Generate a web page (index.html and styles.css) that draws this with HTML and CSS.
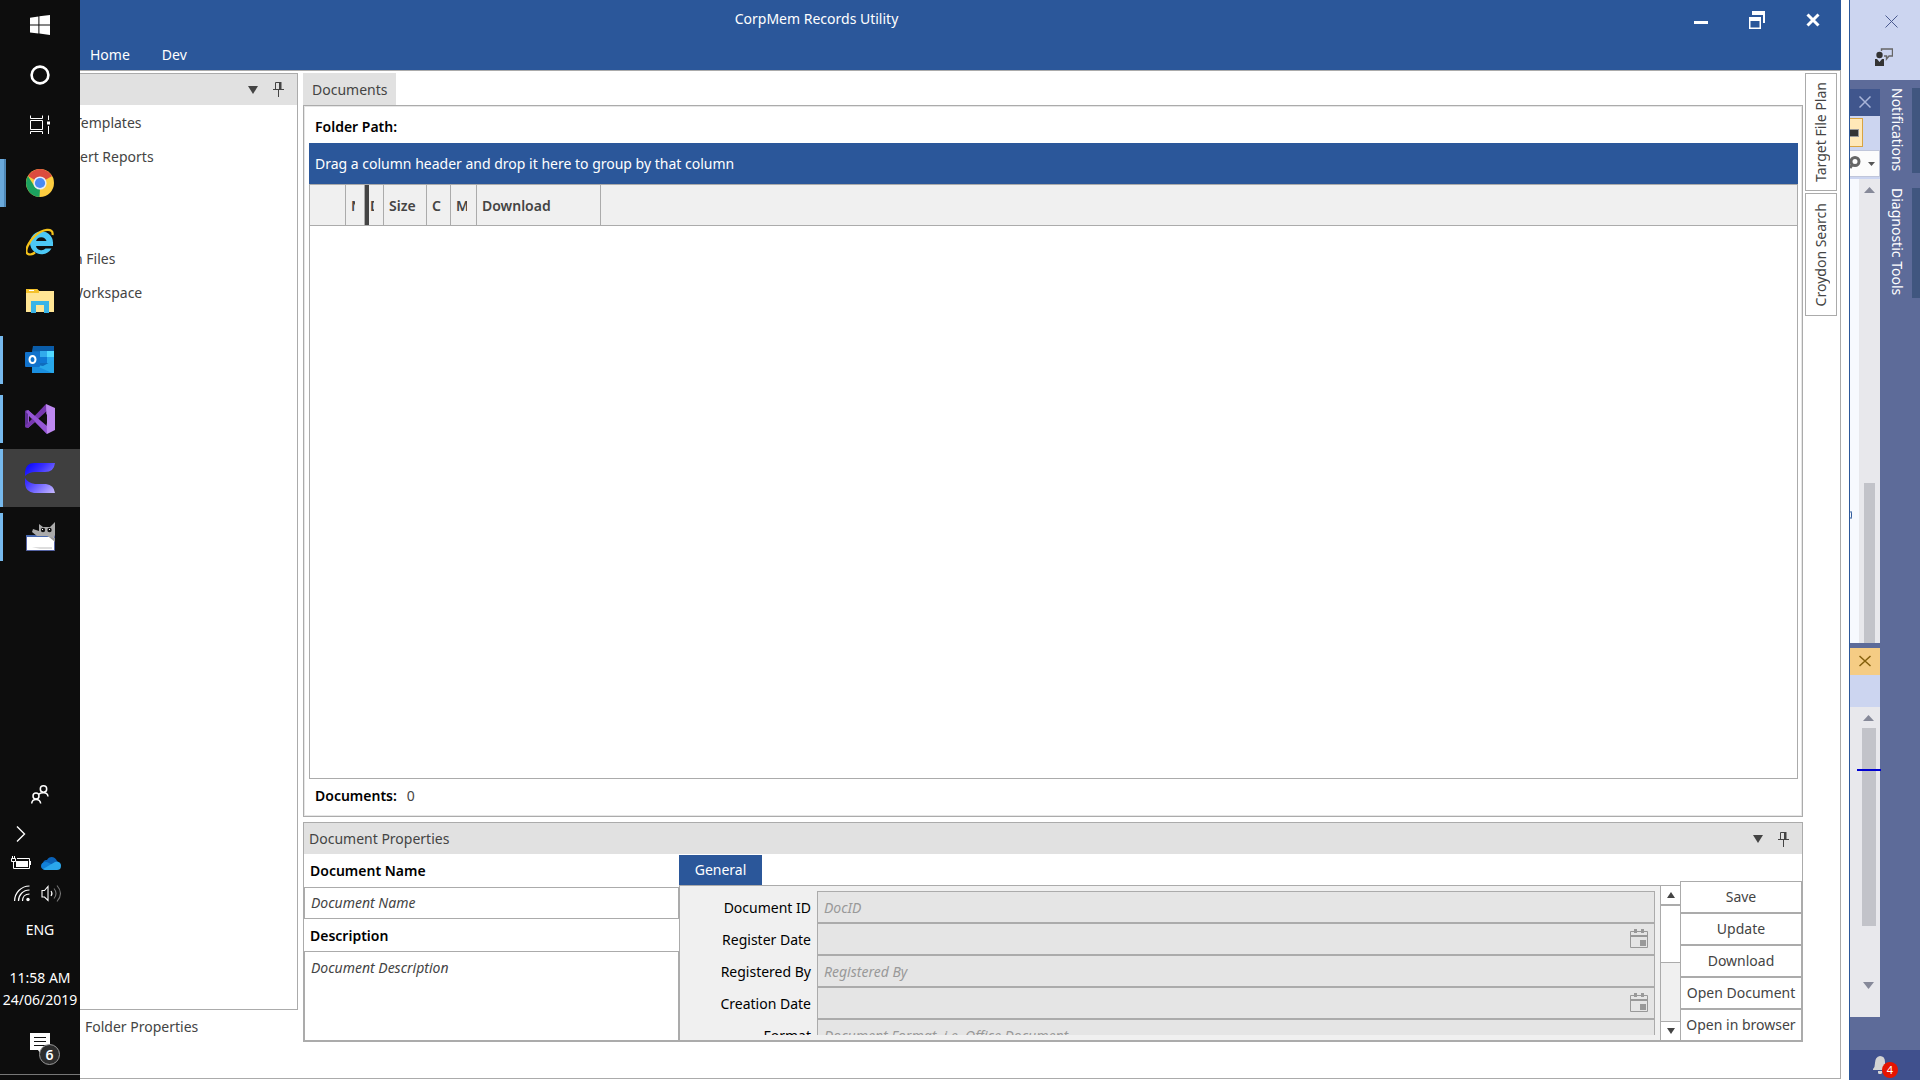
FILE: index.html
```
<!DOCTYPE html>
<html lang="en">
<head>
<meta charset="utf-8">
<title>CorpMem Records Utility</title>
<link rel="stylesheet" href="styles.css">
</head>
<body>
<nav class="taskbar" aria-label="Taskbar">
  <button class="tb-sys" aria-label="Start"><svg width="20" height="20" viewBox="0 0 20 20" fill="#fff"><path d="M0 2.7 8.4 1.5V9.4H0zM9.4 1.3 20 0V9.4H9.4zM0 10.4H8.4V18.5L0 17.4zM9.4 10.4H20V20L9.4 18.6z"/></svg></button>
  <button class="tb-sys" aria-label="Cortana"><svg width="20" height="20" viewBox="0 0 20 20"><circle cx="10" cy="10" r="8.4" fill="none" stroke="#fff" stroke-width="2.6"/></svg></button>
  <button class="tb-sys" aria-label="Task view"><svg width="20" height="20" viewBox="0 0 20 20" fill="none" stroke="#fff"><path d="M.5 .5V3.5H12.5V.5M.5 5.5H12.5V14.5H.5zM.5 19V16.5H12.5V19M18.5 .5V5M18.5 11V19"/><path d="M17 6.5h3v3h-3z" fill="#fff" stroke="none"/></svg></button>
  <div class="tb-apps">
    <button class="tb-app open multi" aria-label="Chrome"><svg width="28" height="28" viewBox="0 0 28 28"><circle cx="14" cy="14" r="14" fill="#fdcd40"/><path d="M14 14 1.9 7A14 14 0 0 1 26.1 7z" fill="#dc4b3e"/><path d="M1.9 7 8.6 17.5 14 20.5 13.5 28A14 14 0 0 1 1.9 7z" fill="#1ba25f"/><circle cx="14" cy="14" r="6.6" fill="#e8eefa"/><circle cx="14" cy="14" r="5.1" fill="#4a8af4"/></svg></button>
    <button class="tb-app" aria-label="Internet Explorer"><svg width="28" height="28" viewBox="0 0 28 28" fill="none"><path d="M8 15.500H27A11.500 11.500 0 1 0 25.500 20.500H19.500A5.500 5 0 0 1 10 18H27V15.500z" fill="#4cc8f5"/><path d="M10 13A5.500 5.500 0 0 1 20.500 13z" fill="#111"/><path d="M26.500 7C28-1 16 1 9 8 2 14-2 24 2 26 4 27 7 26 9 24.500" stroke="#f4c21b" stroke-width="2.200"/></svg></button>
    <button class="tb-app" aria-label="File Explorer"><svg width="28" height="24" viewBox="0 0 28 24"><path d="M0 0H11L13 2H28V23H0z" fill="#ffe594"/><path d="M0 0H11L13 2V4H0z" fill="#f4c22c"/><path d="M3 1h5v1H3z" fill="#fff"/><path d="M5 24V12H23V24H18V16H10V24z" fill="#39b4e8"/></svg></button>
    <button class="tb-app open" aria-label="Outlook"><svg width="30" height="28" viewBox="0 0 30 28"><path d="M8 0H29V27H7V6z" fill="#0f6cbd"/><path d="M8 0H29V5H8z" fill="#0a5ca8"/><path d="M15 5h7v6h-7z" fill="#31abec"/><path d="M22 5h7v6h-7z" fill="#50d9ff"/><path d="M15 11h7v6h-7z" fill="#0f78d4"/><path d="M22 11h7v6h-7z" fill="#2aa8ee"/><path d="M7 18 18 20 29 14V27H7z" fill="#28a8ea"/><path d="M7 18 27 27H7z" fill="#1a8fe0"/><rect y="6" width="15" height="15" rx="1" fill="#1172cc"/><ellipse cx="7.500" cy="13.500" rx="3" ry="3.600" fill="none" stroke="#fff" stroke-width="2"/></svg></button>
    <button class="tb-app open" aria-label="Visual Studio"><svg width="30" height="30" viewBox="0 0 30 30"><path d="M0 7 3 6 22 24V30L10 18 3 24 0 23z" fill="#9a5bd6"/><path d="M0 7 3 6V24L0 23z" fill="#5e2e96"/><path d="M3 24 0 22 21 0 23 6z" fill="#7737b0"/><path d="M3 6 22 22V30L1 8z" fill="#9556d6"/><path d="M21 0 30 4V26L22 30z" fill="#bd88f0"/><path d="M4 12 7 15 4 18zM16 15 22 10V20z" fill="#131013"/></svg></button>
    <button class="tb-app open active" aria-label="CorpMem Records Utility"><svg width="30" height="30" viewBox="0 0 30 30"><defs><linearGradient id="cg" x1="0" y1="0" x2="1" y2="1"><stop offset="0" stop-color="#00f"/><stop offset=".35" stop-color="#3a30ff"/><stop offset="1" stop-color="#c8baff"/></linearGradient></defs><path d="M0 13V9Q1 0 9 0H30Q29 9 20 9H10Q4 9 0 13zM0 15Q3 20 10 21H21Q29 22 30 30H9Q1 29 0 21z" fill="url(#cg)"/></svg></button>
    <button class="tb-app open" aria-label="GIMP"><svg width="30" height="30" viewBox="0 0 30 30"><path d="M1.500 13.500H29.500V28.500H1.500z" fill="#fff" stroke="#5563a4"/><path d="M1 13h28v2H1z" fill="#4667ae"/><path d="M14 2 18 5H25L30 0V13L28 17 22 14H12L7 10 8 7 14 9z" fill="#aaa"/><path d="M24 15 30 20V16z" fill="#999"/><circle cx="18" cy="8" r="2.200" fill="#111"/><circle cx="24.500" cy="8" r="2.200" fill="#111"/><path d="M17 7h1v1h-1zM24 7h1v1h-1z" fill="#fff"/><path d="M7 25h20v2H15z" fill="#ddd"/></svg></button>
  </div>
  <div class="tray">
    <button class="tray-btn people" aria-label="People"><svg width="18" height="19" viewBox="0 0 18 19" fill="none" stroke="#fff" stroke-width="1.500"><circle cx="12.500" cy="4" r="3.200"/><path d="M8 9.500C9 7.500 16.500 6 17 11.500"/><circle cx="5" cy="11" r="3"/><path d="M.7 18.500C1 13 9 13 9.700 18.500"/></svg></button>
    <button class="tray-btn more" aria-label="Show hidden icons"><svg width="10" height="16" viewBox="0 0 10 16" fill="none" stroke="#fff" stroke-width="1.400"><path d="M1 .5 8.500 8 1 15.500"/></svg></button>
    <div class="tray-row">
      <svg width="20" height="14" viewBox="0 0 20 14" fill="none" stroke="#fff"><path d="M6 2.500H18.500V12.500H2.500V6"/><path d="M5 5h12v6H5zM19 5h1v4h-1z" fill="#fff" stroke="none"/><path d="M.5 2.500H4.500V5.500H.5zM1.500 0V2M3.500 0V2"/></svg>
      <svg width="20" height="13" viewBox="0 0 20 13"><path d="M2 7C2 3 5 3 6 3 8-1 14-1 16 4L18 6 12 10z" fill="#0a62b8"/><path d="M0 9C0 5 5 4 8 6L14 9 6 13H4Q0 12 0 9z" fill="#1180d8"/><path d="M2 12 14 5C19 4 20 7 20 9 20 12 18 13 16 13H4z" fill="#2aa6ec"/></svg>
    </div>
    <div class="tray-row">
      <svg width="17" height="17" viewBox="0 0 17 17" fill="none" stroke="#fff" stroke-width="1.200"><path d="M.6 16C.6 8 7 1 15.500 1M4.500 16C4.500 10 9 5 15.500 5M8.500 16C8.500 12 11 9 15.500 9"/><circle cx="14" cy="14.500" r="1.700" fill="#fff" stroke="none"/></svg>
      <svg width="21" height="17" viewBox="0 0 21 17" fill="none" stroke="#fff" stroke-width="1.100"><path d="M1 5.500H3.500L7 1.500V15.500L3.500 12H1zM10 6Q12 8.500 10 11"/><path d="M13 3.500Q17 8.500 13 13.500M16 .5Q23 8.500 16 16.500" stroke="#777"/></svg>
    </div>
    <span class="lang">ENG</span>
    <span class="clock">11:58 AM<br>24/06/2019</span>
    <button class="tray-btn action" aria-label="Action center"><svg width="20" height="20" viewBox="0 0 20 20"><path d="M0 0H20V17H13L10 20 8 17H0z" fill="#fff"/><path d="M4 4.500H16M4 8.500H16M4 12.500H16" stroke="#111"/></svg><span class="badge">6</span></button>
    <span class="desktop"></span>
  </div>
</nav>

<main class="window">
  <header class="titlebar">
    <h1>CorpMem Records Utility</h1>
    <div class="win-btns">
      <button aria-label="Minimize"><svg width="14" height="14" viewBox="0 0 14 14"><path d="M0 8h14v3H0z" fill="#fff"/></svg></button>
      <button aria-label="Restore"><svg width="16" height="18" viewBox="0 0 16 18" fill="#fff"><path d="M3 0H16V12H14V4H3zM0 6H12V18H0zM1.500 10V16.500H10.500V10z" fill-rule="evenodd"/></svg></button>
      <button aria-label="Close"><svg width="14" height="14" viewBox="0 0 14 14" stroke="#fff" stroke-width="3"><path d="M1.500 1.500 12.500 12.500M12.500 1.500 1.500 12.500"/></svg></button>
    </div>
    <nav class="menu"><a href="#home">Home</a><a href="#dev">Dev</a></nav>
  </header>
  <div class="workspace">
    <aside class="left">
      <section class="folders">
        <div class="pane-head">
          <button aria-label="Pane menu"><svg width="10" height="8" viewBox="0 0 10 8"><path d="M0 0H10L5 8z" fill="#444"/></svg></button>
          <button aria-label="Auto hide"><svg width="11" height="15" viewBox="0 0 11 15" fill="none" stroke="#444"><path d="M2.500 8V.5H7.500V8M0 7.500H11M5.500 8V15"/><path d="M6 0h2.500v8H6z" fill="#444" stroke="none"/></svg></button>
        </div>
        <ul class="tree">
          <li class="cut">Templates</li>
          <li>ert Reports</li>
          <li></li>
          <li></li>
          <li class="cut">n Files</li>
          <li class="cut-wide">Workspace</li>
        </ul>
      </section>
      <a class="bottom-tab" href="#folder">Folder Properties</a>
    </aside>

    <div class="center">
      <a class="doc-tab" href="#documents">Documents</a>
      <section class="documents">
        <h2>Folder Path:</h2>
        <p class="group-bar">Drag a column header and drop it here to group by that column</p>
        <div class="grid">
          <table>
            <colgroup><col class="c-sel"><col class="c-tiny"><col class="c-tiny"><col class="c-size"><col class="c-c"><col class="c-m"><col class="c-dl"><col></colgroup>
            <thead><tr><th></th><th><span>N</span></th><th class="drop"><span>D</span></th><th><span>Size</span></th><th><span>C</span></th><th><span>M</span></th><th><span>Download</span></th><th></th></tr></thead>
          </table>
        </div>
        <p class="count"><b>Documents:</b><span>0</span></p>
      </section>

      <section class="props">
        <div class="pane-head">
          <h2>Document Properties</h2>
          <button aria-label="Pane menu"><svg width="10" height="8" viewBox="0 0 10 8"><path d="M0 0H10L5 8z" fill="#444"/></svg></button>
          <button aria-label="Auto hide"><svg width="11" height="15" viewBox="0 0 11 15" fill="none" stroke="#444"><path d="M2.500 8V.5H7.500V8M0 7.500H11M5.500 8V15"/><path d="M6 0h2.500v8H6z" fill="#444" stroke="none"/></svg></button>
        </div>
        <div class="props-body">
          <form class="names">
            <label for="dname">Document Name</label>
            <input id="dname" placeholder="Document Name">
            <label for="ddesc">Description</label>
            <textarea id="ddesc" placeholder="Document Description"></textarea>
          </form>
          <div class="general">
            <button class="gen-tab">General</button>
            <div class="gen-area">
              <div class="fields">
                <label for="f1">Document ID</label><div class="field"><input id="f1" placeholder="DocID" disabled></div>
                <label for="f2">Register Date</label><div class="field"><input id="f2" disabled><svg width="18" height="20" viewBox="0 0 18 20" fill="none" stroke="#999"><path d="M.5 2.500H17.500V18.500H.5z"/><path d="M0 6h18v2H0zM10 11h6v6h-6zM4 0h3v4H4zM11 0h3v4h-3z" fill="#999" stroke="none"/></svg></div>
                <label for="f3">Registered By</label><div class="field"><input id="f3" placeholder="Registered By" disabled></div>
                <label for="f4">Creation Date</label><div class="field"><input id="f4" disabled><svg width="18" height="20" viewBox="0 0 18 20" fill="none" stroke="#999"><path d="M.5 2.500H17.500V18.500H.5z"/><path d="M0 6h18v2H0zM10 11h6v6h-6zM4 0h3v4H4zM11 0h3v4h-3z" fill="#999" stroke="none"/></svg></div>
                <label for="f5">Format</label><div class="field"><input id="f5" placeholder="Document Format, i.e. Office Document" disabled></div>
              </div>
              <div class="scroll">
                <button aria-label="Scroll up"><svg width="8" height="6" viewBox="0 0 8 6"><path d="M0 6H8L4 0z" fill="#444"/></svg></button>
                <span class="thumb"></span>
                <button class="down" aria-label="Scroll down"><svg width="8" height="6" viewBox="0 0 8 6"><path d="M0 0H8L4 6z" fill="#444"/></svg></button>
              </div>
            </div>
          </div>
          <div class="actions">
            <button>Save</button><button>Update</button><button>Download</button><button>Open Document</button><button>Open in browser</button>
          </div>
        </div>
      </section>
    </div>

    <nav class="side-tabs">
      <a href="#plan"><span>Target File Plan</span></a>
      <a href="#search"><span>Croydon Search</span></a>
    </nav>
  </div>
</main>

<aside class="studio">
  <div class="st-top">
    <button aria-label="Close"><svg width="13" height="13" viewBox="0 0 13 13" stroke="#4a5a90"><path d="M.5 .5 12.500 12.500M12.500 .5 .5 12.500"/></svg></button>
    <button class="feedback" aria-label="Send feedback"><svg width="18" height="18" viewBox="0 0 18 18"><path d="M6.500 3V1H17.500V8H14L11.500 11V8H9" fill="none" stroke="#666" stroke-width="1.400"/><circle cx="4.500" cy="7" r="3.200" fill="#333"/><path d="M0 11H2L4.500 14 7 11H9V18H0z" fill="#333"/></svg></button>
  </div>
  <div class="st-main">
    <div class="st-panes">
      <button class="st-close" aria-label="Close pane"><svg width="12" height="12" viewBox="0 0 12 12" stroke="#a9b5d8" stroke-width="1.500"><path d="M.5 .5 11.500 11.500M11.500 .5 .5 11.500"/></svg></button>
      <div class="st-tools">
        <span class="st-toggle"></span>
        <span class="st-search"><svg width="11" height="15" viewBox="0 0 11 15" fill="none" stroke="#666" stroke-width="3"><circle cx="5" cy="5.500" r="4"/><path d="M2.500 8 0 12"/></svg><svg width="7" height="4" viewBox="0 0 7 4"><path d="M0 0H7L3.500 4z" fill="#555"/></svg></span>
      </div>
      <div class="st-editor"><span class="sliver"></span><div class="st-scroll"><svg width="11" height="6" viewBox="0 0 11 6"><path d="M0 6H11L5.500 0z" fill="#868999"/></svg><span class="st-thumb"></span></div></div>
      <button class="st-close gold" aria-label="Close output"><svg width="12" height="12" viewBox="0 0 12 12" stroke="#85600c" stroke-width="1.500"><path d="M.5 1 11.500 11M11.500 1 .5 11"/></svg></button>
      <div class="st-band"></div>
      <div class="st-out"><svg width="11" height="6" viewBox="0 0 11 6"><path d="M0 6H11L5.500 0z" fill="#868999"/></svg><span class="st-thumb2"><i></i></span><svg width="11" height="7" viewBox="0 0 11 7"><path d="M0 0H11L5.500 7z" fill="#868999"/></svg></div>
    </div>
    <nav class="st-tabs"><a href="#notifications">Notifications</a><a href="#diagnostics">Diagnostic Tools</a></nav>
  </div>
  <footer class="st-status"><span class="bell"><svg width="15" height="18" viewBox="0 0 15 18" fill="#d4d4d4"><path d="M1 13Q3 11 3 7 3 1 8 0 13 0 13 6V9L15 14H1zM6 15h4a2 2 0 0 1-4 2z"/></svg><b>4</b></span></footer>
</aside>
</body>
</html>
```
FILE: styles.css
```
* { box-sizing: border-box; margin: 0; padding: 0; }
body {
  display: grid;
  grid-template-columns: 80px 1fr 71px;
  height: 100vh;
  overflow: hidden;
  background: #fff;
  color: #444;
  font: 14px/20px "Noto Sans", "Open Sans", sans-serif;
}
button, input, textarea { font: inherit; color: inherit; background: none; border: 0; border-radius: 0; }
button { display: flex; align-items: center; justify-content: center; }
a { color: inherit; text-decoration: none; }
svg { display: block; flex: none; }

/* Taskbar */
.taskbar { display: flex; flex-direction: column; background: #0d0d0d; color: #fff; min-height: 0; }
.tb-sys { height: 50px; }
.tb-apps { display: flex; flex-direction: column; gap: 1px; margin-top: 4px; }
.tb-app { position: relative; height: 58px; }
.tb-app.open::before { content: ""; position: absolute; left: 0; top: 5px; bottom: 5px; width: 3px; background: #76b9ed; }
.tb-app.multi::before { width: 5px; border-right: 1px solid #5189b5; box-shadow: inset -1px 0 #4b85b4; background: #6aa9db; }
.tb-app.active { background: #3f3f3f; }
.tb-app.active::before { top: 0; bottom: 0; }
.tray { display: flex; flex-direction: column; margin-top: auto; }
.people { height: 52px; }
.more { height: 28px; justify-content: flex-start; padding-left: 16px; }
.tray-row { display: flex; align-items: center; gap: 10px; height: 30px; padding-left: 11px; }
.tray-row + .tray-row { padding-left: 14px; }
.lang { margin-top: 12px; text-align: center; }
.clock { margin: 27px 0 13px; text-align: center; line-height: 22px; white-space: nowrap; }
.action { position: relative; height: 42px; padding-bottom: 4px; }
.badge {
  position: absolute; left: 39px; top: 20px; width: 21px; height: 21px;
  border: 1px solid #999; border-radius: 50%; background: #2d2d2d; font-weight: 600; line-height: 19px;
}
.desktop { height: 6px; border-top: 1px solid #777; margin-top: 8px; }

/* Application window */
.window { display: flex; flex-direction: column; min-width: 0; min-height: 0; margin: 0 8px 1px 0; border: solid #ababab; border-width: 0 1px 1px 0; }
.titlebar {
  display: grid; grid-template: 39px 31px / 1fr; position: relative; margin-right: -1px;
  height: 71px; background: #2b579a; color: #fff; border-bottom: 1px solid #ababab;
}
.titlebar h1 { font: inherit; line-height: 38px; text-align: center; padding-right: 288px; }
.win-btns { position: absolute; right: 0; top: 0; display: flex; }
.win-btns button { width: 56px; height: 39px; }
.menu { display: flex; gap: 32px; padding: 6px 10px; }
.workspace { flex: 1; display: grid; grid-template-columns: 218px minmax(0, 1fr) 32px; column-gap: 5px; min-height: 0; padding-top: 2px; padding-bottom: 36px; }
.left { display: flex; flex-direction: column; min-width: 0; }
.folders { flex: 1; overflow: hidden; border: solid #ababab; border-width: 1px 1px 1px 0; }
.pane-head { display: flex; align-items: center; justify-content: flex-end; gap: 15px; height: 31px; padding: 0 13px 0 5px; background: #e1e1e1; }
.pane-head h2 { flex: 1; font: inherit; }
.tree { list-style: none; }
.tree li { height: 34px; line-height: 36px; }
.tree .cut { margin-left: -6px; }
.tree .cut-wide { margin-left: -10px; }
.bottom-tab { height: 32px; padding: 7px 5px; }

.center { display: flex; flex-direction: column; min-width: 0; }
.doc-tab { align-self: flex-start; height: 32px; padding: 7px 9px; background: #e1e1e1; }
.documents { flex: 1; display: flex; flex-direction: column; min-height: 0; padding: 0 4px; border: 1px solid #ababab; box-shadow: inset 0 0 0 1px #e6e6e6; }
.documents h2 { height: 37px; padding: 2px 7px 0; font-size: 14px; font-weight: 600; line-height: 38px; color: #000; }
.group-bar { margin-left: 1px; height: 41px; line-height: 42px; padding: 0 6px; background: #2b579a; color: #fff; }
.grid { flex: 1; margin-left: 1px; border: 1px solid #ababab; }
.grid table { width: 100%; table-layout: fixed; border-collapse: separate; border-spacing: 0; }
.grid th { position: relative; height: 41px; padding: 1px 9px 0 5px; background: #f0f0f0; border: solid #ababab; border-width: 0 1px 1px 0; text-align: left; font-weight: 600; overflow: hidden; }
.grid th:last-child { border-right: 0; }
.grid th span { display: block; overflow: hidden; }
.grid .drop::before { content: ""; position: absolute; left: 0; top: 0; bottom: -1px; width: 4px; background: #444; }
.c-sel { width: 36px; }
.c-tiny { width: 19px; }
.c-size { width: 43px; }
.c-c { width: 24px; }
.c-m { width: 26px; }
.c-dl { width: 124px; }
.count { display: flex; gap: 10px; height: 37px; padding: 7px; }
.count b { font-weight: 600; color: #000; }

.props { display: flex; flex-direction: column; height: 220px; margin-top: 5px; border: solid #ababab; border-width: 1px 1px 2px; }
.props .pane-head { padding-top: 1px; }
.props-body { flex: 1; display: grid; grid-template-columns: 375px minmax(0, 1fr) 122px; min-height: 0; }
.names { display: grid; grid-template-rows: 33px 32px 32px 1fr; min-height: 0; }
.names label { padding: 7px 6px; font-weight: 600; color: #000; }
.names input, .names textarea { width: 100%; padding: 0 6px; border: 1px solid #ababab; resize: none; }
.names textarea { padding: 6px; border-bottom: 0; }
::placeholder { color: inherit; opacity: 1; font-style: italic; }
.general { display: flex; flex-direction: column; min-height: 0; padding-top: 1px; }
.gen-tab { width: 83px; height: 30px; background: #2b579a; color: #fff; }
.gen-area { flex: 1; display: flex; min-height: 0; border: solid #ababab; border-width: 1px 0 0 1px; background: #f0f0f0; }
.fields { flex: 1; display: grid; grid-template-columns: 131px 1fr; column-gap: 6px; grid-auto-rows: 32px; overflow: hidden; margin: 5px 5px 5px 0; }
.fields label { padding: 7px 0; text-align: right; color: #000; }
.field { display: flex; align-items: center; padding-right: 6px; background: #e5e5e5; border: 1px solid #ababab; color: #999; }
.field input { flex: 1; height: 30px; padding: 0 6px; }
.scroll { display: flex; flex-direction: column; width: 20px; border-left: 1px solid #ababab; }
.scroll button { height: 19px; background: #fff; border-bottom: 1px solid #ababab; }
.scroll .thumb { height: 58px; background: #fff; border: solid #ababab; border-width: 1px 0; }
.scroll .down { margin-top: auto; border: 0; border-top: 1px solid #ababab; }
.actions { display: flex; flex-direction: column; margin-top: 27px; }
.actions button { flex: none; height: 32px; border: 1px solid #ababab; background: #fff; white-space: nowrap; }
.actions button:last-child { height: 31px; border-bottom: 0; }

.side-tabs { display: flex; flex-direction: column; align-items: flex-start; gap: 2px; margin-left: -3px; }
.side-tabs a { display: flex; align-items: center; justify-content: center; width: 32px; height: 118px; border: 1px solid #ababab; }
.side-tabs a + a { height: 123px; }
.side-tabs span { writing-mode: vertical-rl; transform: rotate(180deg); white-space: nowrap; }

/* IDE strip behind the window */
.studio { display: flex; flex-direction: column; min-height: 0; border-left: 1px solid #2b579a; background: #5d6b99; }
.st-top { height: 80px; padding: 15px 22px 0 25px; background: #ccd5f0; display: flex; flex-direction: column; align-items: flex-end; gap: 20px; }
.feedback { align-self: flex-start; }
.st-main { flex: 1; display: grid; grid-template-columns: 30px 40px; min-height: 0; }
.st-panes { display: flex; flex-direction: column; min-height: 0; padding: 9px 0 33px; }
.st-close { flex: none; height: 27px; padding-bottom: 2px; background: #40568d; }
.st-tools { height: 63px; padding-top: 2px; background: #ccd5f0; }
.st-toggle { display: flex; align-items: center; width: 13px; height: 29px; background: #ffe8b8; border: 1px solid #d9a441; border-left: 0; }
.st-toggle::before { content: ""; width: 8px; height: 6px; background: #333; border: 1px solid #999; border-left: 0; }
.st-search { display: flex; align-items: center; justify-content: space-between; height: 27px; margin-top: 3px; padding-right: 4px; background: #fcfcfc; border: 1px solid #c0c6da; border-left: 0; }
.st-editor { flex: 1; display: flex; min-height: 0; margin-bottom: 5px; background: #f7f9fe; }
.st-scroll { display: flex; flex-direction: column; align-items: center; justify-content: space-between; width: 21px; margin-left: auto; padding-top: 8px; background: #e8e8ec; }
.sliver { align-self: center; width: 2px; height: 8px; margin-top: 208px; border: solid #2b579a; border-width: 1px 1px 1px 0; border-radius: 50%; }
.st-thumb { width: 11px; height: 35%; background: #c2c3c9; }
.gold { background: #f5cc84; }
.st-band { height: 32px; background: #ccd5f0; }
.st-out { display: flex; flex-direction: column; align-items: center; height: 310px; padding: 8px 0 28px 7px; background: #e8e8ec; }
.st-thumb2 { width: 14px; height: 198px; margin: 7px 0 auto; background: #c2c3c9; }
.st-thumb2 i { display: block; width: 24px; height: 2px; margin: 41px 0 0 -5px; background: #0000d0; }
.st-tabs { display: flex; flex-direction: column; gap: 15px; padding-top: 8px; color: #fff; }
.st-tabs a { writing-mode: vertical-rl; width: 40px; height: 85px; border-right: 8px solid #40567f; padding-right: 4px; line-height: 22px; white-space: nowrap; }
.st-tabs a + a { height: 110px; }
.st-status { height: 30px; padding: 6px 0 0 22px; background: #40508d; }
.bell { position: relative; display: block; width: 26px; }
.bell b { position: absolute; left: 10px; top: 6px; width: 16px; height: 16px; border-radius: 50%; background: #e51400; color: #fff; font-size: 11px; font-weight: 400; line-height: 16px; text-align: center; }
```
